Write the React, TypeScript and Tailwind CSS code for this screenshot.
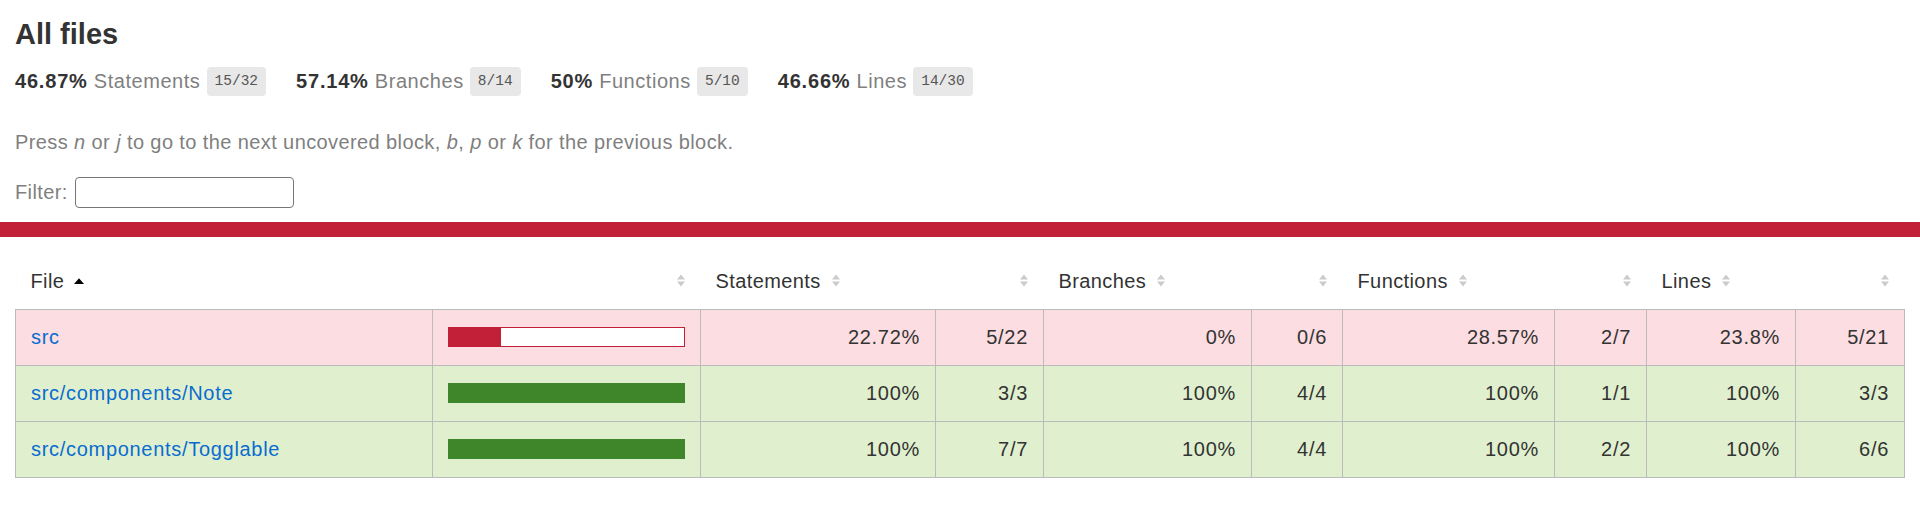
import React from 'react';

type Level = 'low' | 'high';

type Row = {
  file: string;
  level: Level;
  pct: number;
  cells: string[];
};

const summary = [
  { pct: '46.87%', label: 'Statements', frac: '15/32' },
  { pct: '57.14%', label: 'Branches', frac: '8/14' },
  { pct: '50%', label: 'Functions', frac: '5/10' },
  { pct: '46.66%', label: 'Lines', frac: '14/30' },
];

const rows: Row[] = [
  { file: 'src', level: 'low', pct: 22, cells: ['22.72%', '5/22', '0%', '0/6', '28.57%', '2/7', '23.8%', '5/21'] },
  { file: 'src/components/Note', level: 'high', pct: 100, cells: ['100%', '3/3', '100%', '4/4', '100%', '1/1', '100%', '3/3'] },
  { file: 'src/components/Togglable', level: 'high', pct: 100, cells: ['100%', '7/7', '100%', '4/4', '100%', '2/2', '100%', '6/6'] },
];

// sort arrows, drawn instead of the sprite image
const Sorter = ({ active = false }: { active?: boolean }) =>
  active ? (
    <svg width="10" height="15" viewBox="0 0 10 15" className="ml-[10px] inline-block align-baseline">
      <path d="M0 11 L5 5.3 L10 11 Z" fill="#000" />
    </svg>
  ) : (
    <svg width="10" height="15" viewBox="0 0 10 15" className="ml-[10px] inline-block align-baseline">
      <path d="M1 6.5 L5 1.5 L9 6.5 Z M1 8.5 L5 13.5 L9 8.5 Z" fill="#cbcbcb" />
    </svg>
  );

const Bar = ({ pct, level }: { pct: number; level: Level }) => (
  <div
    className={`flex h-[20px] w-full border bg-white ${
      level === 'low' ? 'border-[#c21f39]' : 'border-[#3f862b]'
    }`}
  >
    <div
      className={level === 'low' ? 'h-full bg-[#c21f39]' : 'h-full bg-[#3f862b]'}
      style={{ width: `${pct}%` }}
    />
  </div>
);

const headers = ['Statements', 'Branches', 'Functions', 'Lines'];

const App: React.FC = () => {
  return (
    <div className="min-h-screen bg-white font-['Liberation_Sans',Arial,sans-serif] text-[20px] tracking-[0.4px] text-[#333]">
      <div className="px-[15px] pt-[15px] pb-[14px]">
        <h1 className="m-0 text-[29px] font-bold leading-[38px] tracking-normal">All files</h1>
        <div className="flex">
          {summary.map((s) => (
            <div
              key={s.label}
              className="flex items-center whitespace-pre pt-[14px] pb-[14px] pr-[30px] leading-[23px] tracking-[0.55px]"
            >
              <span className="font-bold tracking-[0.8px]">{s.pct}</span>
              <span className="text-[#7f7f7f]"> {s.label} </span>
              <span className="rounded-[4px] bg-[#e8e8e8] px-[8px] py-[6px] font-['Liberation_Mono',monospace] text-[14.5px] leading-[17px] tracking-normal text-[#555]">
                {s.frac}
              </span>
            </div>
          ))}
        </div>
        <p className="mt-[21px] mb-[23px] leading-[23px] text-[#7f7f7f]">
          Press <em>n</em> or <em>j</em> to go to the next uncovered block, <em>b</em>, <em>p</em> or <em>k</em> for the
          previous block.
        </p>
        <div className="flex items-center leading-[23px] text-[#7f7f7f]">
          <span>Filter:</span>
          <input
            type="search"
            className="ml-[7px] h-[31px] w-[219px] rounded-[4px] border border-[#767676] bg-white px-[3px] outline-none"
          />
        </div>
      </div>

      <div className="h-[15px] bg-[#c21f39]" />

      <div className="px-[15px] pt-[16px]">
        <table className="w-full table-fixed border-collapse">
          <colgroup>
            <col className="w-[417px]" />
            <col className="w-[268px]" />
            <col className="w-[235px]" />
            <col className="w-[108px]" />
            <col className="w-[208px]" />
            <col className="w-[91px]" />
            <col className="w-[212px]" />
            <col className="w-[92px]" />
            <col className="w-[149px]" />
            <col className="w-[109px]" />
          </colgroup>
          <thead>
            <tr className="h-[56px]">
              <th className="whitespace-nowrap px-[15px] text-left font-normal">
                File
                <Sorter active />
              </th>
              <th className="px-[15px] text-right font-normal">
                <Sorter />
              </th>
              {headers.map((h) => (
                <React.Fragment key={h}>
                  <th className="whitespace-nowrap px-[15px] text-left font-normal">
                    {h}
                    <Sorter />
                  </th>
                  <th className="px-[15px] text-right font-normal">
                    <Sorter />
                  </th>
                </React.Fragment>
              ))}
            </tr>
          </thead>
          <tbody className="border border-[#bbb] tracking-[0.7px]">
            {rows.map((r) => (
              <tr
                key={r.file}
                className={`h-[56px] border-b border-[#bbb] ${r.level === 'low' ? 'bg-[#fcdde1]' : 'bg-[#e0f0ce]'}`}
              >
                <td className="whitespace-nowrap border-r border-[#bbb] px-[15px]">
                  <a href="#" className="text-[#0a6ccf] no-underline">
                    {r.file}
                  </a>
                </td>
                <td className="border-r border-[#bbb] px-[15px]">
                  <Bar pct={r.pct} level={r.level} />
                </td>
                {r.cells.map((c, i) => (
                  <td key={i} className="border-r border-[#bbb] px-[15px] text-right last:border-r-0">
                    {c}
                  </td>
                ))}
              </tr>
            ))}
          </tbody>
        </table>
      </div>
    </div>
  );
};

export default App;
